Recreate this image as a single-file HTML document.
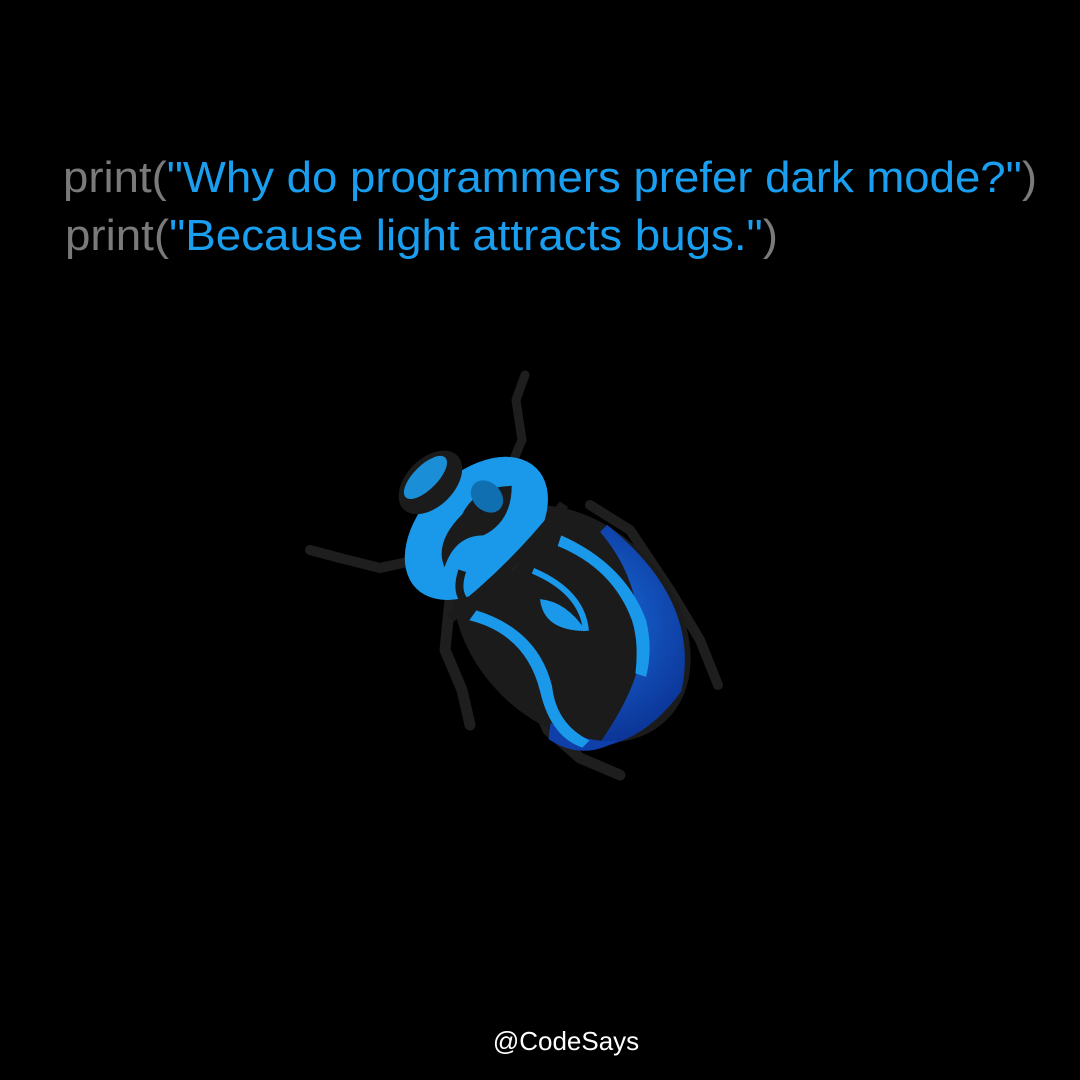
<!DOCTYPE html>
<html><head><meta charset="utf-8"><style>
html,body{margin:0;padding:0;background:#000;width:1080px;height:1080px;overflow:hidden}
svg{display:block}
</style></head><body>
<svg width="1080" height="1080" viewBox="0 0 1080 1080" xmlns="http://www.w3.org/2000/svg">
<rect width="1080" height="1080" fill="#000"/>
<defs>
<radialGradient id="db" cx="0.3" cy="0.5" r="0.8">
<stop offset="0" stop-color="#1a70e0"/><stop offset="1" stop-color="#0a2f90"/>
</radialGradient>
</defs>
<text x="63" y="192" font-family="Liberation Sans, sans-serif" font-size="44" textLength="974" lengthAdjust="spacingAndGlyphs"><tspan fill="#7a7a7a">print(</tspan><tspan fill="#1a9ff0">"Why do programmers prefer dark mode?"</tspan><tspan fill="#7a7a7a">)</tspan></text>
<text x="65" y="250" font-family="Liberation Sans, sans-serif" font-size="44" textLength="713" lengthAdjust="spacingAndGlyphs"><tspan fill="#7a7a7a">print(</tspan><tspan fill="#1a9ff0">"Because light attracts bugs."</tspan><tspan fill="#7a7a7a">)</tspan></text>
<text x="566" y="1050" text-anchor="middle" font-family="Liberation Sans, sans-serif" font-size="26" fill="#fff">@CodeSays</text>

<g fill="none" stroke="#1e1e1e" stroke-linecap="round" stroke-linejoin="round">
<path d="M505 480 L522 440 L516 400 L525 375" stroke-width="9"/>
<path d="M440 555 L380 568 L340 558 L310 550" stroke-width="10"/>
<path d="M450 600 L445 650 L462 690 L470 725" stroke-width="11"/>
<path d="M530 690 L548 730 L580 758 L620 775" stroke-width="11"/>
<path d="M590 505 L630 530 L670 590 L700 640 L718 685" stroke-width="10"/>
</g>
<g transform="translate(540 592) rotate(45)">
<!-- elytra -->
<ellipse cx="45" cy="0" rx="135" ry="100" fill="#1b1b1b"/>
<path d="M0 -95 Q120 -108 170 -30 Q180 30 150 70 Q140 10 120 -20 Q70 -80 0 -85 Z" fill="url(#db)"/>
<path d="M100 85 Q140 75 160 50 Q150 90 110 98 Z" fill="#0f3fa8"/>
<path d="M-30 70 Q20 40 70 70 Q110 95 140 80 L140 70 Q105 82 75 58 Q25 28 -32 58 Z" fill="#1a98ea"/>
<path d="M-25 -55 Q40 -80 95 -55 Q120 -40 135 -15 L125 -10 Q105 -35 85 -45 Q35 -68 -20 -45 Z" fill="#1a98ea"/>
<path d="M5 5 Q25 -12 60 -5 Q30 25 5 5 Z" fill="#1a98ea"/>
<path d="M-20 -10 Q30 -30 60 -5" stroke="#1a98ea" stroke-width="6" fill="none"/>
<!-- pronotum -->
<ellipse cx="-90" cy="0" rx="55" ry="85" fill="#1a98ea"/>
<path d="M-95 -55 Q-70 -30 -80 0 Q-100 20 -85 50 Q-110 40 -110 0 Q-120 -30 -95 -55 Z" fill="#1b1b1b"/>
<ellipse cx="-105" cy="-30" rx="18" ry="14" fill="#0f6fb0"/>
<path d="M-40 -80 Q-30 0 -40 82 L-50 82 Q-40 0 -50 -78 Z" fill="#1b1b1b"/>
<path d="M-70 40 Q-60 60 -45 60" stroke="#1b1b1b" stroke-width="8" fill="none"/>
<!-- head -->
<ellipse cx="-155" cy="0" rx="24" ry="38" fill="#1b1b1b"/>
<ellipse cx="-162" cy="0" rx="12" ry="28" fill="#1a8fd8"/>
</g>
</svg>
</body></html>
